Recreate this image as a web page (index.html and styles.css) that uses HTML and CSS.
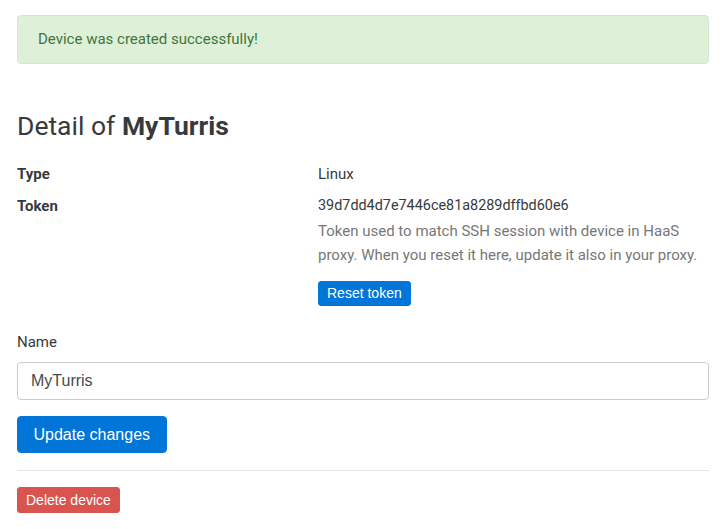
FILE: index.html
```html
<!DOCTYPE html>
<html>
<head>
<meta charset="utf-8">
<link rel="stylesheet" href="styles.css">
</head>
<body>
<div class="container">
  <div class="alert">Device was created successfully!</div>
  <h2 class="title">Detail of <strong>MyTurris</strong></h2>
  <dl class="details">
    <dt>Type</dt>
    <dd>Linux</dd>
    <dt>Token</dt>
    <dd>
      <div class="token">39d7dd4d7e7446ce81a8289dffbd60e6</div>
      <p class="muted">Token used to match SSH session with device in HaaS proxy. When you reset it here, update it also in your proxy.</p>
      <button class="btn btn-primary btn-sm">Reset token</button>
    </dd>
  </dl>
  <form class="form">
    <label class="label" for="name">Name</label>
    <input class="input" id="name" type="text" value="MyTurris">
    <button class="btn btn-primary btn-lg" type="button">Update changes</button>
  </form>
  <hr class="rule">
  <button class="btn btn-danger btn-del">Delete device</button>
</div>
</body>
</html>
```
FILE: styles.css
```css
html, body {
  margin: 0;
  padding: 0;
  background: #fff;
}
body {
  font-family: Roboto, "Liberation Sans", sans-serif;
  font-size: 15px;
  line-height: 22px;
  color: #373a3c;
}
.container {
  padding: 15px 17px;
}
.alert {
  background: #dff0d8;
  border: 1px solid #d0e9c6;
  color: #3c763d;
  border-radius: 4px;
  padding: 15px 20px;
  line-height: 17px;
}
.title {
  margin: 48px 0 22px;
  font-size: 26.5px;
  font-weight: 400;
  line-height: 28.6px;
  color: #373a3c;
}
.title strong {
  font-weight: 700;
}
.details {
  display: grid;
  grid-template-columns: 301px 1fr;
  row-gap: 10px;
  margin: 0;
}
.details dt {
  font-weight: 700;
}
.details dd {
  margin: 0;
}
.token {
  font-size: 14.4px;
  color: #373a3c;
}
.muted {
  margin: 2px 0 14px;
  color: #777;
  line-height: 24px;
}
.btn {
  display: inline-block;
  font-family: "Liberation Sans", Arial, sans-serif;
  border: 1px solid transparent;
  border-radius: 3px;
  color: #fff;
  cursor: pointer;
}
.btn-sm {
  font-size: 14px;
  line-height: 17px;
  padding: 3px 8px;
}
.btn-del {
  font-size: 14px;
  line-height: 18px;
  padding: 3px 8px;
}
.btn-lg {
  font-size: 16px;
  line-height: 19px;
  padding: 8px 15.5px;
  border-radius: 4px;
}
.btn-primary {
  background: #0275d8;
  border-color: #0275d8;
}
.btn-danger {
  background: #d9534f;
  border-color: #d9534f;
}
.form {
  display: flex;
  flex-direction: column;
  align-items: flex-start;
  margin-top: 25px;
}
.label {
  line-height: 22px;
  margin-bottom: 9px;
}
.input {
  box-sizing: border-box;
  width: 100%;
  height: 38px;
  border: 1px solid #ccc;
  border-radius: 4px;
  padding: 0 13px;
  font-family: "Liberation Sans", Arial, sans-serif;
  font-size: 16px;
  color: #464a4c;
  margin-bottom: 16px;
}
.rule {
  border: 0;
  border-top: 1px solid #e5e5e5;
  margin: 17px 0 16px;
}
```
